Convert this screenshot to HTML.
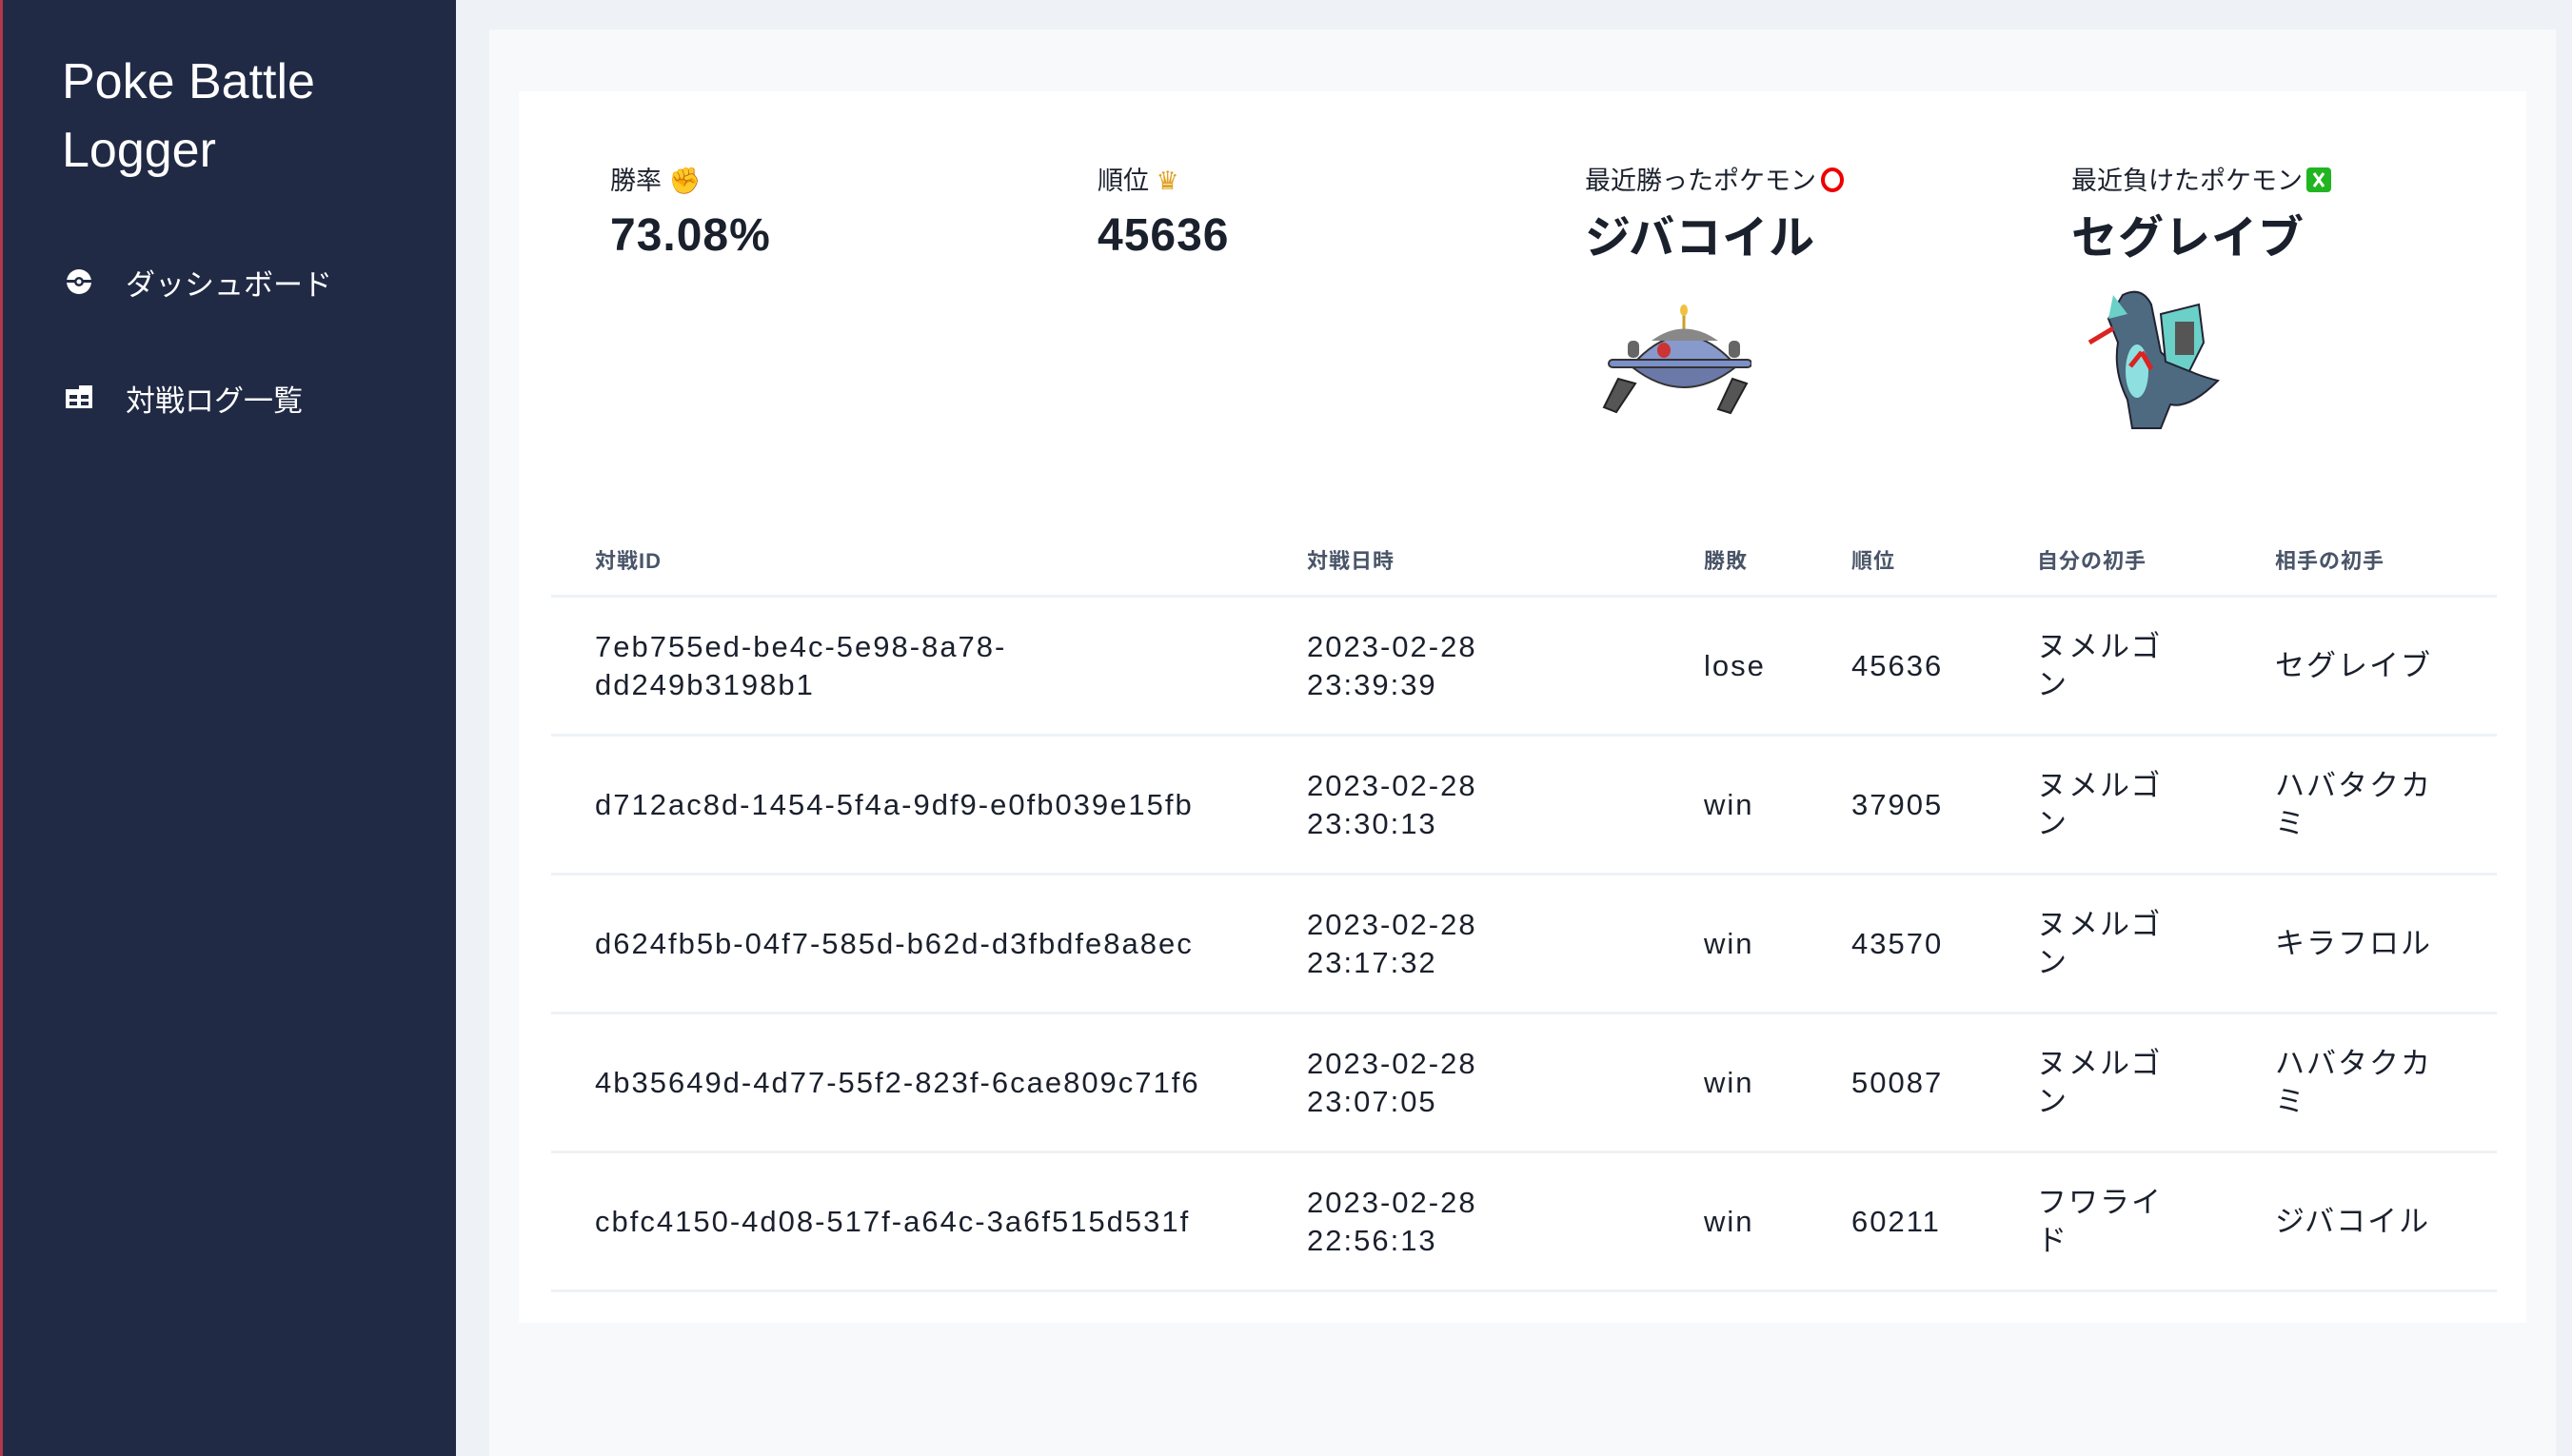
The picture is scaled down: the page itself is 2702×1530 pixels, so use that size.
<!DOCTYPE html>
<html style="overflow:hidden;width:2702px;height:1530px"><head><meta charset="utf-8"><style>
*{margin:0;padding:0;box-sizing:border-box}
body{width:2702px;height:1530px;overflow:hidden;background:#eef2f6;font-family:"Liberation Sans","Noto Sans CJK JP",sans-serif;color:#1a202c;position:relative}
.side{position:absolute;left:0;top:0;width:479px;height:1530px;background:#212a45;border-left:3px solid #b0374f}
.title{position:absolute;left:62px;top:50px;color:#fff;font-size:52px;line-height:72px;font-weight:500}
.nav{position:absolute;left:129px;color:#fff;font-size:31px}
.ico{position:absolute;left:66px}
.panel{position:absolute;left:514px;top:31px;width:2171px;height:1499px;background:#f7f9fb}
.card{position:absolute;left:545px;top:96px;width:2109px;height:1294px;background:#fff}
.a{position:absolute;white-space:nowrap}
.lbl{font-size:27px;top:168px;color:#1a202c}
.val{font-size:48px;font-weight:bold;top:220px;letter-spacing:1px}
.valj{top:210px}
.th{font-size:22px;font-weight:bold;color:#4a5568;top:572px;letter-spacing:1px}
.td{font-size:31px;line-height:40px;letter-spacing:2px}
.line{position:absolute;left:579px;width:2044px;height:3px;background:#edf2f7}
</style></head><body>
<div class="side">
<div class="title">Poke Battle<br>Logger</div>
<svg class="ico" style="top:282px" width="28" height="28" viewBox="0 0 28 28"><circle cx="14" cy="14" r="13" fill="#fff"/><rect x="1" y="12" width="26" height="3" fill="#212a45"/><circle cx="14" cy="14" r="5" fill="#212a45"/><circle cx="14" cy="14" r="2.5" fill="#fff"/></svg>
<div class="nav" style="top:274px">ダッシュボード</div>
<svg class="ico" style="top:405px" width="28" height="24" viewBox="0 0 28 24"><rect x="0" y="4" width="28" height="20" fill="#fff"/><rect x="14" y="0" width="14" height="6" fill="#fff"/><rect x="4" y="10" width="8" height="4" fill="#212a45"/><rect x="4" y="17" width="8" height="4" fill="#212a45"/><rect x="16" y="10" width="8" height="4" fill="#212a45"/><rect x="16" y="17" width="8" height="4" fill="#212a45"/></svg>
<div class="nav" style="top:396px">対戦ログ一覧</div>
</div>
<div class="panel"></div>
<div class="card"></div>

<div class="a lbl" style="left:641px">勝率 <span style="color:#f0b020">✊</span></div>
<div class="a val" style="left:641px">73.08%</div>
<div class="a lbl" style="left:1153px">順位 <span style="color:#e0a020">♛</span></div>
<div class="a val" style="left:1153px">45636</div>
<div class="a lbl" style="left:1665px">最近勝ったポケモン<svg width="26" height="28" viewBox="0 0 26 28" style="vertical-align:-4px;margin-left:4px"><ellipse cx="13" cy="14" rx="10" ry="11" fill="none" stroke="#e00" stroke-width="4"/></svg></div>
<div class="a val valj" style="left:1665px">ジバコイル</div>
<div class="a lbl" style="left:2176px">最近負けたポケモン<svg width="26" height="28" viewBox="0 0 26 28" style="vertical-align:-4px;margin-left:4px"><rect x="0" y="1" width="26" height="26" rx="4" fill="#22b522"/><path d="M8 7 L18 21 M18 7 L8 21" stroke="#fff" stroke-width="3"/></svg></div>
<div class="a val valj" style="left:2176px">セグレイブ</div>

<svg class="a" style="left:1680px;top:318px" width="160" height="120" viewBox="0 0 160 120">
<line x1="89" y1="6" x2="89" y2="30" stroke="#c9a030" stroke-width="3"/><ellipse cx="89" cy="8" rx="4" ry="6" fill="#f0c040"/>
<path d="M40 60 Q89 10 138 60 Z" fill="#8899cc" stroke="#333" stroke-width="2"/>
<path d="M55 40 Q89 15 125 40 Z" fill="#888"/>
<rect x="10" y="60" width="150" height="8" rx="4" fill="#7b8fc8" stroke="#333" stroke-width="2"/>
<path d="M35 68 Q89 110 143 68 Z" fill="#6a79a8" stroke="#333" stroke-width="2"/>
<ellipse cx="68" cy="50" rx="7" ry="8" fill="#c33"/>
<path d="M20 80 L5 110 L18 115 L38 85 Z" fill="#555" stroke="#222" stroke-width="2"/>
<path d="M140 80 L125 112 L138 116 L155 85 Z" fill="#555" stroke="#222" stroke-width="2"/>
<rect x="30" y="40" width="12" height="18" rx="5" fill="#666"/><rect x="136" y="40" width="12" height="18" rx="5" fill="#666"/>
</svg>
<svg class="a" style="left:2190px;top:300px" width="160" height="160" viewBox="0 0 160 160">
<path d="M40 10 Q60 0 70 20 L80 70 Q100 90 140 100 Q110 130 90 125 L80 150 L50 150 L45 120 Q30 90 35 60 L25 35 Z" fill="#4d6a80" stroke="#223" stroke-width="2"/>
<path d="M80 30 L120 20 L125 60 L110 90 L85 80 Z" fill="#6ad0c8" stroke="#223" stroke-width="2"/>
<rect x="95" y="38" width="20" height="35" fill="#555"/>
<ellipse cx="55" cy="90" rx="12" ry="28" fill="#8ee0e0"/>
<path d="M30 45 L5 60 M60 70 L48 85 M60 70 L70 88" stroke="#d22" stroke-width="5"/>
<path d="M30 10 L45 30 L25 35 Z" fill="#6ad0c8"/>
</svg>

<div class="a th" style="left:625px">対戦ID</div>
<div class="a th" style="left:1373px">対戦日時</div>
<div class="a th" style="left:1790px">勝敗</div>
<div class="a th" style="left:1945px">順位</div>
<div class="a th" style="left:2140px">自分の初手</div>
<div class="a th" style="left:2390px">相手の初手</div>

<div class="line" style="top:625px"></div>
<div class="line" style="top:771px"></div>
<div class="line" style="top:917px"></div>
<div class="line" style="top:1063px"></div>
<div class="line" style="top:1209px"></div>
<div class="line" style="top:1355px"></div>

<div class="a td" style="left:625px;top:660px">7eb755ed-be4c-5e98-8a78-<br>dd249b3198b1</div>
<div class="a td" style="left:1373px;top:660px">2023-02-28<br>23:39:39</div>
<div class="a td" style="left:1790px;top:680px">lose</div>
<div class="a td" style="left:1945px;top:680px">45636</div>
<div class="a td" style="left:2140px;top:660px">ヌメルゴ<br>ン</div>
<div class="a td" style="left:2390px;top:680px">セグレイブ</div>

<div class="a td" style="left:625px;top:826px">d712ac8d-1454-5f4a-9df9-e0fb039e15fb</div>
<div class="a td" style="left:1373px;top:806px">2023-02-28<br>23:30:13</div>
<div class="a td" style="left:1790px;top:826px">win</div>
<div class="a td" style="left:1945px;top:826px">37905</div>
<div class="a td" style="left:2140px;top:806px">ヌメルゴ<br>ン</div>
<div class="a td" style="left:2390px;top:806px">ハバタクカ<br>ミ</div>

<div class="a td" style="left:625px;top:972px">d624fb5b-04f7-585d-b62d-d3fbdfe8a8ec</div>
<div class="a td" style="left:1373px;top:952px">2023-02-28<br>23:17:32</div>
<div class="a td" style="left:1790px;top:972px">win</div>
<div class="a td" style="left:1945px;top:972px">43570</div>
<div class="a td" style="left:2140px;top:952px">ヌメルゴ<br>ン</div>
<div class="a td" style="left:2390px;top:972px">キラフロル</div>

<div class="a td" style="left:625px;top:1118px">4b35649d-4d77-55f2-823f-6cae809c71f6</div>
<div class="a td" style="left:1373px;top:1098px">2023-02-28<br>23:07:05</div>
<div class="a td" style="left:1790px;top:1118px">win</div>
<div class="a td" style="left:1945px;top:1118px">50087</div>
<div class="a td" style="left:2140px;top:1098px">ヌメルゴ<br>ン</div>
<div class="a td" style="left:2390px;top:1098px">ハバタクカ<br>ミ</div>

<div class="a td" style="left:625px;top:1264px">cbfc4150-4d08-517f-a64c-3a6f515d531f</div>
<div class="a td" style="left:1373px;top:1244px">2023-02-28<br>22:56:13</div>
<div class="a td" style="left:1790px;top:1264px">win</div>
<div class="a td" style="left:1945px;top:1264px">60211</div>
<div class="a td" style="left:2140px;top:1244px">フワライ<br>ド</div>
<div class="a td" style="left:2390px;top:1264px">ジバコイル</div>
</body></html>
